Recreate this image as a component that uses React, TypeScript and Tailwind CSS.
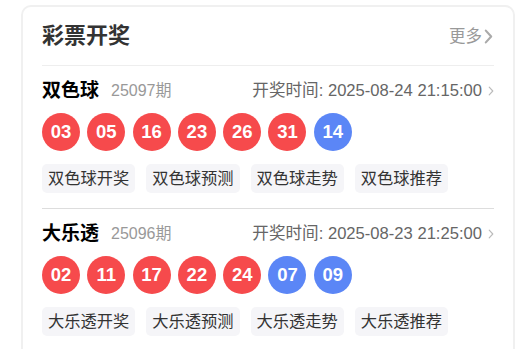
import React from "react";

const font = { fontFamily: '"Liberation Sans", "Noto Sans CJK SC", sans-serif' };

type Lottery = {
  name: string;
  issue: string;
  time: string;
  red: string[];
  blue: string[];
  tags: string[];
};

const data: Lottery[] = [
  {
    name: "双色球",
    issue: "25097期",
    time: "开奖时间: 2025-08-24 21:15:00",
    red: ["03", "05", "16", "23", "26", "31"],
    blue: ["14"],
    tags: ["双色球开奖", "双色球预测", "双色球走势", "双色球推荐"],
  },
  {
    name: "大乐透",
    issue: "25096期",
    time: "开奖时间: 2025-08-23 21:25:00",
    red: ["02", "11", "17", "22", "24"],
    blue: ["07", "09"],
    tags: ["大乐透开奖", "大乐透预测", "大乐透走势", "大乐透推荐"],
  },
];

function Chevron({ className, sw = 1.6 }: { className?: string; sw?: number }) {
  return (
    <svg viewBox="0 0 8 14" className={className} fill="none" stroke="currentColor" strokeWidth={sw} strokeLinecap="round" strokeLinejoin="round">
      <path d="M1.5 1.5 L6.5 7 L1.5 12.5" />
    </svg>
  );
}

function Ball({ n, blue }: { n: string; blue?: boolean }) {
  return (
    <div
      className={`w-[38px] h-[38px] rounded-full flex items-center justify-center text-white font-bold text-[18.5px] ${
        blue ? "bg-[#5b86f6]" : "bg-[#f64a4c]"
      }`}
    >
      {n}
    </div>
  );
}

export default function App() {
  return (
    <div className="w-[530px] h-[349px] bg-white overflow-hidden pl-[21px] pt-[5px]" style={font}>
      <div className="w-[494px] border-2 border-[#f0f0f0] rounded-[10px] px-[19px] h-[400px]">
        <div className="h-[59px] flex items-center justify-between border-b border-[#eeeeee]">
          <div className="text-[22px] font-bold text-[#333] leading-none">彩票开奖</div>
          <div className="flex items-center text-[16.5px] text-[#999] gap-[2px] pr-[1px]">
            <span>更多</span>
            <Chevron className="w-[9px] h-[15px] text-[#aaa]" sw={2} />
          </div>
        </div>
        {data.map((d, i) => (
          <div key={d.name} className={`pt-[13px] pb-[15px] ${i === 0 ? "border-b border-[#dddddd]" : ""}`}>
            <div className="h-[24px] flex items-center justify-between">
              <div className="flex items-center gap-[12px]">
                <span className="text-[19px] font-bold text-black">{d.name}</span>
                <span className="text-[16px] text-[#999]">{d.issue}</span>
              </div>
              <div className="flex items-center gap-[6px] text-[16.6px] text-[#666]">
                <span>{d.time}</span>
                <Chevron className="w-[6px] h-[10px] text-[#bbb]" />
              </div>
            </div>
            <div className="mt-[10px] flex gap-[7.3px]">
              {d.red.map((n, k) => (
                <Ball key={"r" + k} n={n} />
              ))}
              {d.blue.map((n, k) => (
                <Ball key={"b" + k} n={n} blue />
              ))}
            </div>
            <div className="mt-[13px] flex gap-[11px]">
              {d.tags.map((t) => (
                <div key={t} className="h-[29px] px-[6px] rounded-[5px] bg-[#f5f5f8] text-[16.25px] text-[#333] flex items-center">
                  {t}
                </div>
              ))}
            </div>
          </div>
        ))}
      </div>
    </div>
  );
}
